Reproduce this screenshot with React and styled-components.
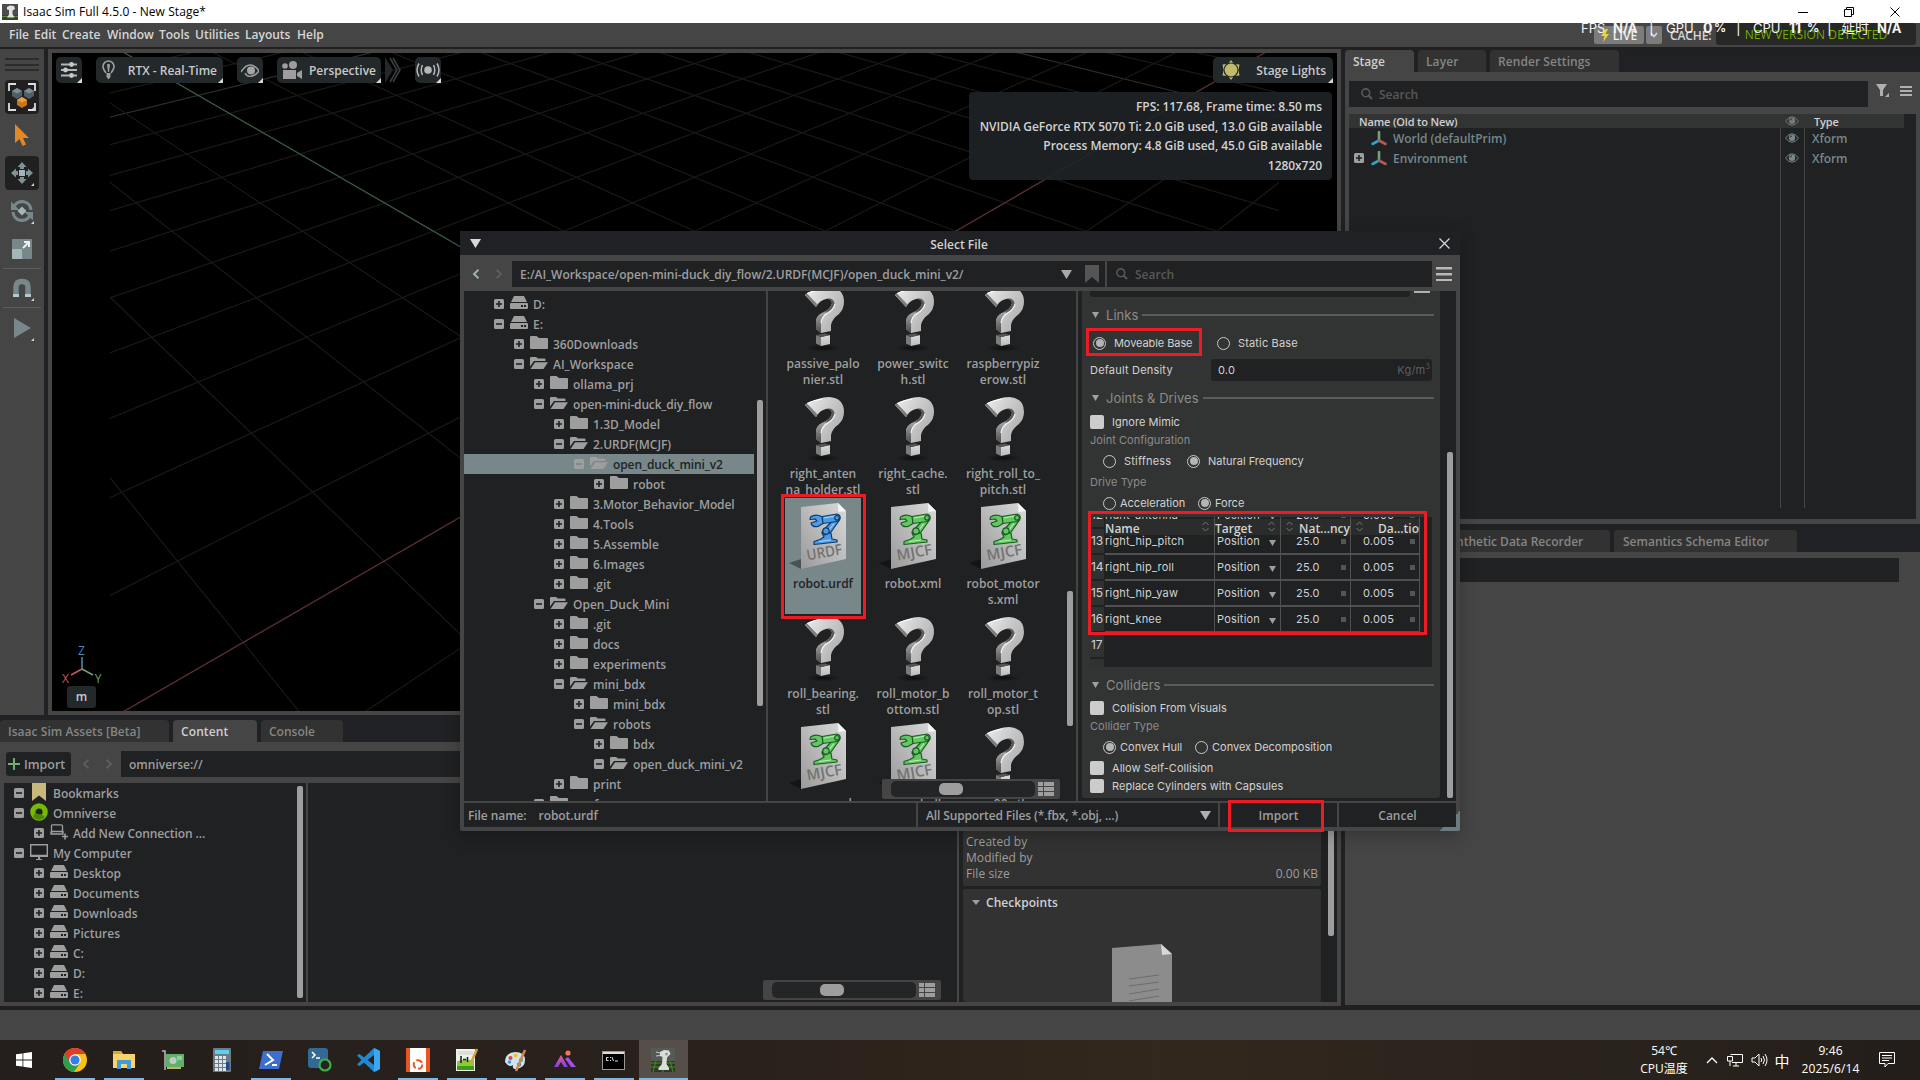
import React from 'react';
import styled, { createGlobalStyle, css } from 'styled-components';

const Global = createGlobalStyle`
  * { box-sizing: border-box; }
  html, body { margin: 0; padding: 0; overflow: hidden; background: #1f2123; }
  body { font-family: "Open Sans", "Noto Sans", "Noto Sans CJK SC", sans-serif; font-size: 12px; font-weight: 600; color: #9e9e9e; }
  svg { display: block; flex: none; }
`;

const Screen = styled.div`
  position: relative; width: 1920px; height: 1080px; overflow: hidden;
  display: flex; flex-direction: column; background: #1f2124;
`;
const Row = styled.div`display: flex; align-items: center; height: ${p => p.$h || 26}px; margin-bottom: ${p => p.$mb || 0}px; padding-left: ${p => p.$pl || 0}px;`;
const Gap = styled.span`display: block; width: ${p => p.$w}px; flex: none;`;
const Grow = styled.span`flex: 1;`;

/* ---------- window chrome ---------- */
const TitleBar = styled.div`
  height: 23px; flex: none; background: #fff; color: #000; display: flex; align-items: center;
  padding-left: 2px; font-weight: 400; font-size: 12px; letter-spacing: 0.08px;
  > span { margin-left: 5px; flex: 1; line-height: 24px; }
`;
const WinButtons = styled.div`display: flex; width: 140px; height: 20px; > div { width: 46px; display: flex; align-items: center; justify-content: center; }`;
const MenuBar = styled.div`
  height: 26px; flex: none; background: #454545; border-bottom: 2px solid #231f1e; display: flex; align-items: center;
  padding-left: 9px; color: #d6d6d6; position: relative;
`;
const MenuItem = styled.span`width: ${p => p.$w}px; white-space: nowrap; line-height: 22px;`;
const MenuRight = styled.div`margin-left: auto; display: flex; align-items: center; height: 24px; padding-right: 4px;`;
const LiveBtn = styled.div`
  width: ${p => p.$w}px; height: 18px; margin-right: 2px; border-radius: 2px; background: #7c7c7c; color: #eee;
  display: flex; align-items: center; justify-content: center; gap: 4px;
`;
const Cache = styled.span`width: 46px; margin-left: 6px; white-space: nowrap; letter-spacing: -0.1px;`;
const Version = styled.div`width: 200px; height: 22px; background: #272727; border-radius: 3px; color: #6fae00; text-align: center; line-height: 24px; align-self: flex-start; font-weight: 500; white-space: nowrap; letter-spacing: 0.1px;`;
const Overlay = styled.div`
  position: absolute; left: 1581px; top: 18px; display: flex; color: #f4f4f4; line-height: 20px; font-size: 14px; font-weight: 400; white-space: nowrap;
  font-family: Inter, "Noto Sans CJK SC", sans-serif;
`;
const OvCell = styled.i`font-style: normal; width: ${p => p.$w}px; font-weight: ${p => (p.$b ? 700 : 400)}; font-size: ${p => p.$s || 14}px;`;

/* ---------- workspace ---------- */
const Workspace = styled.div`display: flex; height: 957px; flex: none;`;
const LeftArea = styled.div`width: 1341px; display: flex; flex-direction: column;`;
const TopArea = styled.div`display: flex; height: 666px;`;
const ToolRail = styled.div`
  width: 44px; margin-right: 4px; background: #454545; display: flex; flex-direction: column; align-items: center; padding-top: 9px;
`;
const Grip = styled.div`width: 34px; height: 13px; display: flex; flex-direction: column; justify-content: space-between; margin-bottom: 9px; > i { height: 2px; background: #2c2c2c; }`;
const Tool = styled.div`
  width: 34px; height: 34px; margin-bottom: 4px; border-radius: 4px; background: ${p => (p.$on ? '#202020' : 'transparent')};
  display: flex; align-items: center; justify-content: center; position: relative;
  ${p => p.$tick && css`&::after { content: ''; position: absolute; right: 5px; bottom: 4px; border-left: 3px solid transparent; border-bottom: 3px solid #d8d8d8; }`}
`;
const RailLine = styled.div`width: 38px; height: 1px; background: #5d5d5d; margin: ${p => p.$m};`;

const ViewFrame = styled.div`flex: 1; background: #454545; padding: 4px;`;
const View = styled.div`position: relative; width: 1285px; height: 658px; background: #000; overflow: hidden;`;
const GridSvg = styled.svg`position: absolute; left: 0; top: 0;`;
const ViewBar = styled.div`position: absolute; left: 4px; right: 4px; top: 4px; height: 26px; display: flex;`;
const ViewBtn = styled.div`
  position: relative; width: ${p => p.$w}px; height: 26px; margin-right: ${p => p.$m || 0}px; padding: 0 ${p => p.$p || 0}px; border-radius: 5px 5px 0 5px; background: #23282b; color: #c8c8c8;
  display: flex; align-items: center; justify-content: ${p => (p.$wide ? 'space-between' : 'center')}; white-space: nowrap;
  ${p => p.$end && css`margin-left: auto;`}
  &::after { content: ''; position: absolute; right: 0; bottom: 0; border-left: 5px solid transparent; border-bottom: 5px solid #d8d8d8; }
`;
const Hud = styled.div`
  position: absolute; left: 917px; top: 39px; width: 363px; height: 88px; border-radius: 4px; background: rgba(31,36,38,0.9);
  color: #d2d2d2; text-align: right; padding: 5px 10px 0 0; line-height: 19.6px; white-space: nowrap; letter-spacing: -0.06px;
`;
const Axis = styled.svg`position: absolute; left: 8px; top: 590px;`;
const Unit = styled.div`position: absolute; left: 15px; top: 633px; width: 29px; height: 22px; border-radius: 3px; background: #23282b; color: #c8c8c8; text-align: center; line-height: 22px;`;

/* ---------- tabs and panels ---------- */
const Tabs = styled.div`display: flex; height: 22px; margin-top: ${p => p.$mt || 0}px; gap: 4px;`;
const Tab = styled.div`
  width: ${p => p.$w}px; height: 22px; border-radius: 4px 4px 0 0; padding-left: ${p => p.$pl || 8}px; line-height: 24px; white-space: nowrap; overflow: hidden;
  background: ${p => (p.$on ? '#454545' : '#323232')}; color: ${p => (p.$on ? '#cfcfcf' : '#858585')}; letter-spacing: ${p => p.$ls || 0}px;
`;
const Body = styled.div`background: #454545; height: ${p => p.$h}px; display: flex; flex-direction: column; padding: ${p => p.$p};`;
const Field = styled.div`
  width: ${p => p.$w}px; height: ${p => p.$h || 26}px; background: #1f2123; padding-left: ${p => p.$pl || 8}px; display: flex; align-items: center; flex: none;
  color: ${p => (p.$dim ? '#585858' : '#9e9e9e')}; white-space: nowrap; margin: ${p => p.$m || '0'};
`;
const ImportBtn = styled.div`width: 65px; height: 24px; border-radius: 3px; background: #1f2123; display: flex; align-items: center; padding-left: 2px; gap: 4px; font-size: 12.4px;`;
const Arrows = styled.div`display: flex; gap: ${p => p.$g}px; padding-left: ${p => p.$pl}px; width: ${p => p.$w}px;`;
const Split = styled.div`display: flex; gap: 2px; height: ${p => p.$h}px; flex: none;`;
const Pane = styled.div`position: relative; width: ${p => p.$w}px; background: #1f2123; overflow: hidden; padding-top: ${p => p.$pt || 0}px;`;
const Thumb = styled.div`position: absolute; width: 6px; border-radius: 2px; background: #9e9e9e; left: ${p => p.$x}px; top: ${p => p.$y}px; height: ${p => p.$h}px;`;
const TreeLine = styled.div`
  display: flex; align-items: center; height: 20px; width: 290px; padding-left: ${p => p.$pl}px; white-space: nowrap; letter-spacing: ${p => p.$ls}px;
  background: ${p => (p.$sel ? '#77878a' : 'transparent')}; color: ${p => (p.$sel ? '#202325' : '#9e9e9e')};
`;
const TreeIcon = styled.span`width: 18px; margin: -3px 5px 0 6px; display: flex; justify-content: center;`;

const SizeBar = styled.div`position: absolute; left: ${p => p.$x}px; top: ${p => p.$y}px; width: 178px; height: 20px; border-radius: 2px; background: #454545; display: flex; align-items: center; padding-left: 9px; gap: 3px;`;
const Track = styled.div`width: 144px; height: 16px; border-radius: 5px; background: #232526; padding: 2px 0 0 48px; > i { display: block; width: 24px; height: 12px; border-radius: 5px; background: #9e9e9e; }`;

const InfoPane = styled(Pane)`padding-left: 4px; display: flex; flex-direction: column; gap: 3px;`;
const Card = styled.div`width: 358px; height: ${p => p.$h}px; background: #323232; border-radius: 2px; padding: ${p => p.$p}; overflow: hidden;`;
const InfoLine = styled.div`display: flex; justify-content: space-between; line-height: 16px; font-weight: 500; letter-spacing: 0.06px;`;
const CardTitle = styled.div`display: flex; align-items: center; gap: 6px; color: #d0d0d0; height: 20px; letter-spacing: 0.05px;`;
const Paper = styled.svg`margin: 32px 0 0 140px;`;

/* ---------- right column ---------- */
const RightArea = styled.div`width: 575px; margin-left: 4px; display: flex; flex-direction: column; padding-top: 1px;`;
const SearchTools = styled.div`display: flex; align-items: center; gap: 10px; padding-left: 8px; height: 26px; margin-top: -6px;`;
const StageTree = styled.div`width: 567px; height: 405px; background: #1f2123; margin-top: 7px; display: flex; flex-direction: column;`;
const StageHead = styled.div`width: 555px; height: 14px; background: #323434; color: #d0d0d0; font-size: 11px; display: flex; align-items: center; padding-left: 10px; letter-spacing: -0.15px; > span:first-child { width: 426px; } > span:last-child { margin-left: 15px; }`;
const StageCols = styled.div`display: flex; height: 380px;`;
const StageCol = styled.div`width: ${p => p.$w}px; border-right: ${p => (p.$line ? '1px solid #454545' : '0')};`;
const StageRow = styled.div`height: 20px; display: flex; align-items: center; color: #77878a; padding-left: ${p => p.$pl || 0}px; padding-top: 1px; white-space: nowrap; > b { font-weight: 600; margin-left: 6px; letter-spacing: -0.05px; } > svg { margin-top: -1px; }`;

/* ---------- dialog ---------- */
const Dialog = styled.div`
  position: absolute; left: 460px; top: 231px; width: 1000px; height: 600px; background: #454545; border-radius: 2px; overflow: hidden;
  box-shadow: 0 4px 16px rgba(0,0,0,0.25);
`;
const DialogTitle = styled.div`height: 24px; background: #1f2124; color: #d0d0d0; display: flex; align-items: center; padding: 0 10px 0 10px; > span { flex: 1; text-align: center; padding: 2px 2px 0 0; }`;
const PathBar = styled.div`height: 36px; padding: 6px 0 4px; display: flex; align-items: center;`;
const PathField = styled(Field)`padding-right: 6px; gap: 13px; > span { flex: 1; letter-spacing: -0.045px; }`;
const Panes = styled.div`display: flex; gap: 2px; height: 510px; padding: 0 4px;`;
const FootBar = styled.div`position: relative; display: flex; gap: 2px; height: 24px; margin: 2px 4px 0;`;
const FootCell = styled.div`width: ${p => p.$w}px; height: 24px; background: #1f2123; display: flex; align-items: center; justify-content: ${p => (p.$c ? 'center' : 'flex-start')}; padding: ${p => p.$p || '1px 0 0'}; white-space: pre; letter-spacing: ${p => p.$ls || 0}px;`;
const Resize = styled.div`position: absolute; right: 0; bottom: 0; width: 20px; height: 20px; background: linear-gradient(135deg, transparent 50%, #6a7c80 50%);`;

const Files = styled.div`display: grid; grid-template-columns: repeat(3, 90px); grid-auto-rows: 110px; padding-left: 10px; margin-top: -13px;`;
const FileCell = styled.div`display: flex; flex-direction: column; align-items: center; position: relative;`;
const FileSel = styled.div`position: absolute; left: 7px; top: 0; width: 76px; height: 116px; background: #77878a;`;
const FileArt = styled.div`height: 78px; width: 76px; position: relative; display: flex; padding-top: ${p => p.$pt}px; padding-left: ${p => p.$pl}px;`;
const FileName = styled.div`position: relative; text-align: center; line-height: 16px; white-space: pre; color: ${p => (p.$sel ? '#202325' : '#9e9e9e')};`;

const SettingsPane = styled.div`position: relative; width: 378px; background: #1f2123; padding-left: 4px;`;
const Settings = styled.div`
  width: 358px; height: 507px; background: #323433; border-radius: 0 0 3px 3px; padding: 0 6px 0 8px; color: #d2d2d2;
  font-family: Inter, Roboto, sans-serif; font-size: 11px; font-weight: 400; letter-spacing: 0.04px;
`;
const Section = styled.div`
  height: ${p => p.$h}px; padding-top: ${p => p.$pt || 0}px; padding-left: 2px; display: flex; align-items: center; color: #8b8b8b; font-size: 13px; white-space: nowrap; letter-spacing: 0.05px;
  > svg { margin-right: 7px; }
  &::after { content: ''; flex: 1; height: 2px; background: #5c5c5c; margin-left: 4px; }
`;
const Line = styled.div`height: ${p => p.$h}px; padding-left: ${p => p.$pl || 0}px; display: flex; align-items: center; white-space: nowrap; color: ${p => (p.$dim ? '#8b8b8b' : '#d2d2d2')};`;
const LineLabel = styled.span`width: 121px; letter-spacing: 0.2px;`;
const RadioItem = styled.div`display: flex; align-items: center; gap: ${p => p.$g}px; width: ${p => p.$w}px; letter-spacing: ${p => p.$ls || 0}px;`;
const Dot = styled.i`
  width: 13px; height: 13px; border-radius: 50%; border: 1.5px solid #c8c8c8; flex: none; display: flex; align-items: center; justify-content: center;
  ${p => p.$on && css`&::after { content: ''; width: 8px; height: 8px; border-radius: 50%; background: #b4b4b4; }`}
`;
const Check = styled.i`width: 14px; height: 14px; border-radius: 2px; background: #cccccc; margin-right: 8px; flex: none;`;
const NumField = styled.div`width: 221px; height: 22px; border-radius: 3px; background: #1f2123; display: flex; align-items: center; padding: 0 2px 0 7px; justify-content: space-between; letter-spacing: 0.2px; > span:last-child { color: #5e5e5e; } sup { font-size: 7px; line-height: 0; }`;
const PartField = styled.div`height: 6px; display: flex; justify-content: space-between; padding-right: 4px; > div { width: 320px; background: #1f2123; border-radius: 0 0 3px 3px; } > i { width: 16px; height: 2px; background: #b0b0b0; }`;

const Joints = styled.div`position: relative; width: 342px; height: 150px; background: #1f2123; overflow: hidden;`;
const JHead = styled.div`position: absolute; left: 15px; top: 2px; width: 315px; height: 16px; background: #2b2d2d; display: grid; grid-template-columns: 110px 66px 70px 69px; font-family: "Open Sans", sans-serif; font-weight: 600; font-size: 12px; letter-spacing: 0; line-height: 20px; white-space: nowrap;`;
const JHeadCell = styled.div`display: flex; justify-content: space-between; border-right: 1px solid #555; padding-left: ${p => p.$pl || 0}px; padding-right: ${p => p.$pr || 0}px; > svg { margin-top: 2px; }`;
const JRows = styled.div`margin-top: -14px;`;
const JRow = styled.div`display: flex; height: 26px; letter-spacing: 0.2px;`;
const JIndex = styled.div`width: 14px; height: 24px; margin-right: 1px; padding-left: 1px; background: #303232; letter-spacing: -0.1px; font-size: 12px; line-height: 24px;`;
const JCell = styled.div`
  width: ${p => p.$w}px; height: 26px; border-bottom: 2px solid #505050; border-right: 1px solid #505050; padding: 0 ${p => p.$pr || 0}px 0 ${p => p.$pl || 0}px;
  display: flex; justify-content: space-between; align-items: center; white-space: nowrap;
  > svg { margin-top: 4px; }
`;
const Key = styled.i`width: 5px; height: 5px; background: #555;`;

const Mark = styled.div`position: absolute; border: 3px solid #ed1c24; left: ${p => p.$x}px; top: ${p => p.$y}px; width: ${p => p.$w}px; height: ${p => p.$h}px;`;

/* ---------- status and task bar ---------- */
const StatusBar = styled.div`height: 34px; flex: none; background: #454545; border-top: 4px solid #231f1e;`;
const TaskBar = styled.div`height: 40px; flex: none; display: flex; background: linear-gradient(90deg, #241f1d, #2a211b 40%, #33281d 60%, #2a231d 80%, #241e1a); color: #fff; font-weight: 400;`;
const Slot = styled.div`
  width: ${p => p.$w || 49}px; height: 40px; display: flex; align-items: center; justify-content: center; position: relative; padding-right: ${p => p.$pr || 2}px;
  background: ${p => (p.$active ? '#564e48' : 'transparent')};
  &::after { content: ''; position: absolute; bottom: 0; left: ${p => (p.$active ? 0 : 4)}px; right: ${p => (p.$active ? 0 : 5)}px; height: 2px; background: ${p => (p.$run || p.$active ? '#76b9ed' : 'transparent')}; }
`;
const Tray = styled.div`margin-left: auto; display: flex; align-items: center; height: 40px; padding-right: 14px;`;
const TwoLine = styled.div`width: ${p => p.$w}px; text-align: center; font-size: 12px; line-height: 18px; white-space: nowrap; letter-spacing: ${p => p.$ls || 0}px;`;
const TrayIcon = styled.div`width: ${p => p.$w}px; padding-left: ${p => p.$pl || 0}px; display: flex; justify-content: center; font-size: 15px;`;

/* ---------- drawings ---------- */
const Expander = ({ open, sel }) => (
  <svg width="10" height="10"><rect width="10" height="10" rx="1.5" fill="#9e9e9e" />
    <path d={open ? 'M2 5H8' : 'M2 5H8M5 2V8'} stroke={sel ? '#77878a' : '#1f2123'} strokeWidth="1.6" /></svg>
);
const icons = {
  drive: <svg width="18" height="13"><path d="M4 0H14L17 6H1Z" fill="#9e9e9e" /><path fillRule="evenodd" d="M1 7H17Q18 7 18 8V12Q18 13 17 13H1Q0 13 0 12V8Q0 7 1 7ZM11 9V11H13V9ZM14 9V11H16V9Z" fill="#9e9e9e" /></svg>,
  folder: <svg width="18" height="13"><path d="M0 1Q0 0 1 0H6.5L9 2H17Q18 2 18 3V12Q18 13 17 13H1Q0 13 0 12Z" fill="#9e9e9e" /></svg>,
  open: <svg width="18" height="12"><path d="M0 1Q0 0 1 0H6L8 1.5H14.5Q15.5 1.5 15.5 2.5V4H4L0 9.5Z" fill="#9e9e9e" /><path d="M5 5.2H18L13.5 12H0.5Z" fill="#9e9e9e" /></svg>,
  mark: <svg width="14" height="18"><path d="M0 0H14V18L7 12.500L0 18Z" fill="#c9b87c" /></svg>,
  omni: <svg width="18" height="18"><circle cx="9" cy="9" r="6.2" fill="none" stroke="#78b800" strokeWidth="5.2" /><path d="M3 14A8 8 0 0 0 15 14L11 11Q7 12 5.500 9Z" fill="#4f8500" /></svg>,
  conn: <svg width="18" height="16"><path d="M1.500 10V2Q1.500 .8 3 .8H11Q12.500 .8 12.500 2V9M1 7.500H13V10H9M1 7.500V10H9" fill="none" stroke="#9e9e9e" strokeWidth="1.300" /><path d="M15 9.500V15.500M12 12.500H18" stroke="#9e9e9e" strokeWidth="1.600" /></svg>,
  pc: <svg width="18" height="16"><path d="M.7 .7H17.300V11.500H.7Z" fill="none" stroke="#9e9e9e" strokeWidth="1.400" /><path d="M0 11H18V13H0ZM8 13H10V15H12V16H6V15H8Z" fill="#9e9e9e" /></svg>,
};
const Tri = ({ w = 8, h = 6, c = '#9e9e9e' }) => <svg width={w} height={h}><path d={`M0 0H${w}L${w / 2} ${h}Z`} fill={c} /></svg>;
const Burger = ({ w, g, t, c = '#b0b0b0' }) => <svg width={w} height={g * 2 + t}>{[0, 1, 2].map(i => <rect key={i} y={i * g} width={w} height={t} fill={c} />)}</svg>;
const Lens = () => <svg width="12" height="12"><circle cx="4.800" cy="4.800" r="3.900" fill="none" stroke="#585858" strokeWidth="1.600" /><path d="M7.500 7.500L11 11" stroke="#585858" strokeWidth="2" /></svg>;
const Chev = ({ left, c }) => <svg width="8" height="10"><path d={left ? 'M6.500 .8L2 5L6.500 9.200' : 'M1.500 .8L6 5L1.500 9.200'} fill="none" stroke={c} strokeWidth="2" /></svg>;
const ListIcon = () => <svg width="16" height="14">{[0, 5, 10].map(y => <g key={y} fill="#9e9e9e"><rect y={y} width="5" height="4" /><rect x="6" y={y} width="10" height="4" /></g>)}</svg>;
const EyeIcon = ({ c = '#77878a' }) => <svg width="14" height="10"><path d="M.5 5Q7 -3.500 13.500 5Q7 13.500 .5 5Z" fill="none" stroke={c} /><circle cx="7" cy="4.800" r="3.200" fill={c} /><path d="M5 4.500Q5.300 3 7 3" fill="none" stroke="#1f2123" strokeWidth=".9" /></svg>;
const Xform = () => <svg width="16" height="15"><path d="M8 9V1" stroke="#75a275" strokeWidth="2.600" strokeLinecap="round" /><path d="M8 9.500L1.500 13" stroke="#2ea3c4" strokeWidth="2.600" strokeLinecap="round" /><path d="M8 9.500L14.500 13" stroke="#b15a5a" strokeWidth="2.600" strokeLinecap="round" /></svg>;
const Cross = ({ s, c, w = 1 }) => <svg width={s} height={s}><path d={`M.5 .5L${s - 0.5} ${s - 0.5}M${s - 0.5} .5L.5 ${s - 0.5}`} stroke={c} strokeWidth={w} /></svg>;
const Sort = () => <svg width="7" height="11"><path d="M.5 4L3.500 1L6.500 4M.5 7L3.500 10L6.500 7" fill="none" stroke="#777" /></svg>;

const HiddenSvg = styled.svg`position: absolute;`;
const Defs = () => (
  <HiddenSvg width="0" height="0"><defs>
    <linearGradient id="qg" x1="0" y1="0" x2="1" y2=".6"><stop offset="0" stopColor="#efefef" /><stop offset=".5" stopColor="#cdcdcd" /><stop offset="1" stopColor="#b0b0b0" /></linearGradient>
    <linearGradient id="qs" x1="0" y1="0" x2="0" y2="1"><stop offset="0" stopColor="#dcdcdc" /><stop offset="1" stopColor="#bbbbbb" /></linearGradient>
    <linearGradient id="qd" x1="0" y1="0" x2="0" y2="1"><stop offset="0" stopColor="#a8a8a8" /><stop offset="1" stopColor="#4c4c4c" /></linearGradient>
    <linearGradient id="pg" x1="1" y1="0" x2="0" y2="1"><stop offset="0" stopColor="#dadada" /><stop offset="1" stopColor="#9a9a9a" /></linearGradient>
    <radialGradient id="sh"><stop offset="0" stopColor="#0c0d0d" /><stop offset="1" stopColor="#0c0d0d" stopOpacity="0" /></radialGradient>
    <linearGradient id="vi" x1="0" y1="0" x2="0" y2="1"><stop offset="0" stopColor="#f06080" /><stop offset="1" stopColor="#7a3cf0" /></linearGradient>
  </defs></HiddenSvg>
);
const Question = () => (
  <svg width="44" height="66" viewBox="0 0 44 66">
    <ellipse cx="19" cy="61" rx="17" ry="3.500" fill="url(#sh)" />
    <path d="M12 20L1 8Q5 4 14 2Q20 0 25 0Q40 1 40 15Q40 22 35 27Q28 32 27 38V44L17 46L12 42V35Q12 29 18 26Q27 22 28 16Q27 11 22 12Q16 13 12 20Z" fill="url(#qg)" />
    <path d="M1 8L3 6.500L13.500 17.500L12 20Z" fill="#7c7c7c" />
    <path d="M22 12Q29 10 30.500 16Q30 22 22 26L18 26Q27 22 28 16Q27 12 22 12Z" fill="#5a5a5a" />
    <path d="M12 42V35Q12 29 18 26L23 24.500Q17 30 17 36V46Z" fill="url(#qd)" />
    <path d="M17 36Q18 29 24 26Q30 22 31 17" fill="none" stroke="#f2f2f2" strokeWidth="1.200" />
    <path d="M3 6.500Q10 3.500 18 2" fill="none" stroke="#ffffff" strokeWidth="1" />
    <path d="M12 48L17 50V59L12 56.500Z" fill="#7b7b7b" /><path d="M17 50L26 48V57L17 59Z" fill="url(#qs)" /><path d="M12 48L21 46.500L26 48L17 50Z" fill="#565656" />
  </svg>
);
const Arm = ({ c, l, d }) => (
  <g stroke={d} strokeWidth="1.200" strokeLinejoin="round" fill={c}>
    <path d="M33 30H42L43 36L48 37V39L25 41.500V38.500L31 36.500L35 34Z" />
    <path d="M43 18L50.500 17L42 29L36 32L33 29Z" />
    <path d="M34 14L30 12.500Q25 11.500 21.500 14L21 16.500L26 16L28 18L22 20Q23 24.500 29 23.500L34 20.500Z" />
    <path d="M33 13.500L48 11Q52 12 51 16L48 18.500L34 20.500Z" />
    <path d="M35 15L46 13M40 27L45 20.500M30 38.500L42 37" stroke={l} fill="none" />
    <circle cx="48" cy="14.800" r="2.300" /><circle cx="37" cy="28" r="3.200" />
  </g>
);
const Doc = ({ kind }) => (
  <svg width="60" height="68" viewBox="0 0 60 68">
    <path d="M0 60L12 56V66Z" fill="#000" opacity=".38" />
    <path d="M12 4L49 0L57 8V56L12 66Z" fill="url(#pg)" />
    <path d="M49 0L57 8L49.500 9Z" fill="#f6f6f6" />
    {kind === 'URDF' ? <Arm c="#4a9be8" l="#a9d4fb" d="#123a66" /> : <Arm c="#62c962" l="#b4f2a8" d="#1c5a26" />}
    <text x="18.500" y="57.500" transform="rotate(-10 18.500 57.500)" fontFamily="Open Sans" fontWeight="600" fontSize="15" fill="#737373" textLength="36" lengthAdjust="spacingAndGlyphs">{kind}</text>
  </svg>
);

const CX = 642.5, CY = 329, F = 1013.2;
const project = (x, y) => {
  const depth = 1.73205 - (x + y) / 1.73205;
  return [CX + (F * (y - x)) / 1.41421 / depth, CY + (F * (x + y)) / 2.44949 / depth];
};
const gridLine = (s, alongX) => {
  const far = -12, near = 2.85 - s;
  const a = alongX ? project(far, s) : project(s, far);
  const b = alongX ? project(near, s) : project(s, near);
  return `M${a[0].toFixed(1)} ${a[1].toFixed(1)}L${b[0].toFixed(1)} ${b[1].toFixed(1)}`;
};
const ks = Array.from({ length: 49 }, (_, i) => i - 34);
const Scene = () => (
  <GridSvg width="1285" height="658">
    <clipPath id="vc"><rect x="58" y="0" width="1169" height="658" /></clipPath>
    <g clipPath="url(#vc)" fill="none">
      {ks.filter(k => k !== 0).map(k => (
        <path key={k} d={gridLine(k * 0.2, true) + gridLine(k * 0.2, false)} stroke={k % 10 === 0 ? '#2d2d2d' : '#191919'} strokeWidth="1.2" />
      ))}
      <path d={gridLine(0, true)} stroke="#5e3130" strokeWidth="1.3" />
      <path d={gridLine(0, false)} stroke="#3b5a3f" strokeWidth="1.3" />
    </g>
  </GridSvg>
);

const TreeRow = ({ lvl, base, open, icon, label, sel }) => (
  <TreeLine $pl={base + lvl * 20} $sel={sel} $ls={label.length > 22 ? -0.17 : label.length > 15 ? -0.1 : 0}>
    <Expander open={open} sel={sel} /><TreeIcon>{icons[icon]}</TreeIcon>{label}
  </TreeLine>
);

const contentTree = [
  [0, 1, 'mark', 'Bookmarks'], [0, 1, 'omni', 'Omniverse'], [1, 0, 'conn', 'Add New Connection ...'], [0, 1, 'pc', 'My Computer'],
  [1, 0, 'drive', 'Desktop'], [1, 0, 'drive', 'Documents'], [1, 0, 'drive', 'Downloads'], [1, 0, 'drive', 'Pictures'],
  [1, 0, 'drive', 'C:'], [1, 0, 'drive', 'D:'], [1, 0, 'drive', 'E:'],
];
const dialogTree = [
  [0, 0, 'drive', 'D:'], [0, 1, 'drive', 'E:'], [1, 0, 'folder', '360Downloads'], [1, 1, 'open', 'AI_Workspace'],
  [2, 0, 'folder', 'ollama_prj'], [2, 1, 'open', 'open-mini-duck_diy_flow'], [3, 0, 'folder', '1.3D_Model'], [3, 1, 'open', '2.URDF(MCJF)'],
  [4, 1, 'open', 'open_duck_mini_v2', 1], [5, 0, 'folder', 'robot'], [3, 0, 'folder', '3.Motor_Behavior_Model'], [3, 0, 'folder', '4.Tools'],
  [3, 0, 'folder', '5.Assemble'], [3, 0, 'folder', '6.Images'], [3, 0, 'folder', '.git'], [2, 1, 'open', 'Open_Duck_Mini'],
  [3, 0, 'folder', '.git'], [3, 0, 'folder', 'docs'], [3, 0, 'folder', 'experiments'], [3, 1, 'open', 'mini_bdx'],
  [4, 0, 'folder', 'mini_bdx'], [4, 1, 'open', 'robots'], [5, 0, 'folder', 'bdx'], [5, 1, 'open', 'open_duck_mini_v2'],
  [3, 0, 'folder', 'print'], [2, 0, 'folder', 'conf'],
];
const files = [
  ['q', 'passive_palo\nnier.stl'], ['q', 'power_switc\nh.stl'], ['q', 'raspberrypiz\nerow.stl'],
  ['q', 'right_anten\nna_holder.stl'], ['q', 'right_cache.\nstl'], ['q', 'right_roll_to_\npitch.stl'],
  ['URDF', 'robot.urdf', 1], ['MJCF', 'robot.xml'], ['MJCF', 'robot_motor\ns.xml'],
  ['q', 'roll_bearing.\nstl'], ['q', 'roll_motor_b\nottom.stl'], ['q', 'roll_motor_t\nop.stl'],
  ['MJCF', 'scene.xml'], ['MJCF', 'scene_ball.'], ['q', 'sg90.stl'],
];
const joints = [[12, 'right_antenna'], [13, 'right_hip_pitch'], [14, 'right_hip_roll'], [15, 'right_hip_yaw'], [16, 'right_knee']];

const Slider = ({ x, y }) => <SizeBar $x={x} $y={y}><Track><i /></Track><ListIcon /></SizeBar>;

const ImportSettings = () => (
  <Settings>
    <PartField><div /><i /></PartField>
    <Section $h={35}><Tri w={7} h={6} c="#a0a0a0" />Links</Section>
    <Line $h={22} $pl={3}><RadioItem $g={8} $w={124} $ls={-0.08}><Dot $on />Moveable Base</RadioItem><RadioItem $g={8} $ls={0.15}><Dot />Static Base</RadioItem></Line>
    <Line $h={32}><LineLabel>Default Density</LineLabel><NumField><span>0.0</span><span>Kg/m<sup>3</sup></span></NumField></Line>
    <Section $h={24}><Tri w={7} h={6} c="#a0a0a0" />Joints &amp; Drives</Section>
    <Line $h={23}><Check />Ignore Mimic</Line>
    <Line $h={14} $dim>Joint Configuration</Line>
    <Line $h={28} $pl={13}><RadioItem $g={8} $w={84} $ls={0.2}><Dot />Stiffness</RadioItem><RadioItem $g={8}><Dot $on />Natural Frequency</RadioItem></Line>
    <Line $h={14} $dim>Drive Type</Line>
    <Line $h={28} $pl={13}><RadioItem $g={4} $w={95}><Dot />Acceleration</RadioItem><RadioItem $g={4}><Dot $on />Force</RadioItem></Line>
    <Joints>
      <JRows>
        {joints.map(([n, name]) => (
          <JRow key={n}><JIndex>{n}</JIndex><JCell $w={110}>{name}</JCell><JCell $w={66} $pl={2} $pr={4}>Position<Tri w={7} h={6} /></JCell>
            <JCell $w={70} $pl={15} $pr={4}>25.0<Key /></JCell><JCell $w={69} $pl={12} $pr={4}>0.005<Key /></JCell></JRow>
        ))}
        <JRow><JIndex>17</JIndex></JRow><JRow><JIndex /></JRow>
      </JRows>
      <JHead>
        <JHeadCell $pr={5}>Name<Sort /></JHeadCell><JHeadCell $pr={5}>Target<Sort /></JHeadCell>
        <JHeadCell $pl={5}><Sort />Nat...ncy</JHeadCell><JHeadCell $pl={5}><Sort />Da...tio</JHeadCell>
      </JHead>
    </Joints>
    <Section $h={30} $pt={6}><Tri w={7} h={6} c="#a0a0a0" />Colliders</Section>
    <Line $h={22}><Check />Collision From Visuals</Line>
    <Line $h={14} $dim>Collider Type</Line>
    <Line $h={28} $pl={13}><RadioItem $g={4} $w={92}><Dot $on />Convex Hull</RadioItem><RadioItem $g={4}><Dot />Convex Decomposition</RadioItem></Line>
    <Line $h={14}><Check />Allow Self-Collision</Line>
    <Line $h={22}><Check />Replace Cylinders with Capsules</Line>
  </Settings>
);

const FileDialog = () => (
  <Dialog>
    <DialogTitle><Tri w={11} h={9} c="#d8d8d8" /><span>Select File</span><Cross s={11} c="#d8d8d8" w={1.2} /></DialogTitle>
    <PathBar>
      <Arrows $g={15} $pl={12} $w={52}><Chev left c="#9fb0b3" /><Chev c="#56605f" /></Arrows>
      <PathField $w={593}><span>E:/AI_Workspace/open-mini-duck_diy_flow/2.URDF(MCJF)/open_duck_mini_v2/</span><Tri w={11} h={9} c="#a8a8a8" />
        <svg width="14" height="18"><path d="M0 0H14V18L7 12L0 18Z" fill="#555" /></svg></PathField>
      <Field $w={325} $pl={9} $dim $m="0 4px 0 2px"><Lens /><Gap $w={7} />Search</Field>
      <Burger w={16} g={6} t={2.5} c="#b8b8b8" />
    </PathBar>
    <Panes>
      <Pane $w={302} $pt={3}>
        {dialogTree.map(([l, o, i, t, s], n) => <TreeRow key={n} lvl={l} base={30} open={o} icon={i} label={t} sel={s} />)}
        <Thumb $x={293} $y={109} $h={306} />
      </Pane>
      <Pane $w={308}>
        <Files>
          {files.map(([k, t, s], n) => (
            <FileCell key={n}>{s && <FileSel />}
              <FileArt $pt={k === 'q' ? 9 : 5} $pl={k === 'q' ? 19 : 4}>{k === 'q' ? <Question /> : <Doc kind={k} />}</FileArt>
              <FileName $sel={s}>{t}</FileName></FileCell>
          ))}
        </Files>
        <Thumb $x={299} $y={300} $h={135} />
        <Slider x={114} y={488} />
      </Pane>
      <SettingsPane><ImportSettings /><Thumb $x={369} $y={161} $h={346} /></SettingsPane>
    </Panes>
    <Resize />
    <FootBar>
      <FootCell $w={452} $p="1px 0 0 4px" $ls={-0.08}>File name:<Gap $w={12} />robot.urdf</FootCell>
      <FootCell $w={300} $p="1px 7px 0 8px" $ls={-0.13}><Grow>All Supported Files (*.fbx, *.obj, ...)</Grow><Tri w={11} h={9} c="#b0b0b0" /></FootCell>
      <FootCell $w={117} $c>Import</FootCell><FootCell $w={117} $c>Cancel</FootCell>
    </FootBar>
  </Dialog>
);

const menu = [['File', 25], ['Edit', 28], ['Create', 45], ['Window', 52], ['Tools', 36], ['Utilities', 50], ['Layouts', 52], ['Help', 40]];

const taskIcons = [
  <svg width="24" height="24" viewBox="0 0 24 24"><circle cx="12" cy="12" r="12" fill="#fbc116" /><path d="M12 12L1.600 6A12 12 0 0 0 11 24L17 15Z" fill="#2f9e4f" /><path d="M12 6H22.400A12 12 0 0 0 1.600 6L7 14Z" fill="#e33b2e" /><circle cx="12" cy="12" r="5.800" fill="#fff" /><circle cx="12" cy="12" r="4.600" fill="#3a7de8" /></svg>,
  <svg width="22" height="18"><path d="M0 0H8L10 3H22V17H0Z" fill="#f8d26b" /><path d="M0 0H8L9 3H0Z" fill="#e0a52a" /><path d="M4 9H18V18H14V13H8V18H4Z" fill="#3f9bdc" /></svg>,
  <svg width="24" height="20"><path d="M1 1H4V20" fill="none" stroke="#bbb" strokeWidth="1.500" /><rect x="5" y="4" width="18" height="13" fill="#5fb06a" /><rect x="16" y="6" width="5" height="4" fill="#8fd08f" /><path d="M6 17H20V19H6Z" fill="#c9b060" /><circle cx="12" cy="10.500" r="3.500" fill="#c4c8c4" /></svg>,
  <svg width="18" height="24"><rect width="18" height="24" rx="1" fill="#6e7a84" /><rect x="2" y="2" width="14" height="4" fill="#5bd0f0" />{[8, 12, 16, 20].map(y => [2, 6, 10].map(x => <rect key={x + '-' + y} x={x} y={y} width="3" height="3" fill="#dfe5ea" />))}<rect x="13" y="14" width="3.500" height="8" fill="#1d4e8a" /></svg>,
  <svg width="24" height="18"><path d="M4 0H24L20 18H0Z" fill="#3c6fd0" /><path d="M8 3L14 9L6 14M13 14H18" fill="none" stroke="#fff" strokeWidth="2" /></svg>,
  <svg width="24" height="24"><rect width="20" height="20" rx="3" fill="#336a94" /><path d="M4 4L7 7L4 10M8 10H12" fill="none" stroke="#fff" strokeWidth="1.500" /><circle cx="17" cy="17" r="5.500" fill="#222" stroke="#3fae49" strokeWidth="2.200" /></svg>,
  <svg width="24" height="24"><path fillRule="evenodd" d="M17 0L23 3V21L17 24L7 14.500L2.500 18L0 16.500L4.500 12L0 7.500L2.500 6L7 9.500ZM17 7L10.500 12L17 17Z" fill="#1f8ad2" /><path d="M17 0L23 3V21L17 24Z" fill="#3ba7ee" /></svg>,
  <svg width="24" height="24"><rect width="24" height="24" fill="#fff" /><rect width="4" height="24" fill="#e95420" /><rect x="20" width="4" height="24" fill="#e95420" /><circle cx="12" cy="16.500" r="4.300" fill="none" stroke="#e95420" strokeWidth="2" strokeDasharray="6.500 2.500" /></svg>,
  <svg width="24" height="24"><path d="M1 1H20V23H1Z" fill="#eef2ea" /><path d="M2 13Q10 11 19 12V22H2Z" fill="#8acb3c" /><path d="M2 18H19V22H2Z" fill="#3f9a1c" /><path d="M3 4H18M3 6H18" stroke="#c9cfc5" /><path d="M6 8V15M8 11.500H11M12.500 9V14" stroke="#222" strokeWidth="1.600" /><path d="M22 1L15.500 16" stroke="#d8a03a" strokeWidth="2.500" /></svg>,
  <svg width="24" height="24"><path d="M1 14Q1 5 11 4Q21 4 21 12Q21 20 12 21Q8 21 9 17Q5 20 1 14Z" fill="#cfe4ef" /><circle cx="6.500" cy="10" r="2" fill="#e04040" /><circle cx="11.500" cy="7.500" r="2" fill="#f0c030" /><circle cx="5.500" cy="14" r="1.800" fill="#3f9bdc" /><circle cx="17" cy="12" r="2" fill="#40a040" /><circle cx="15" cy="16.500" r="2" fill="#3060d0" /><path d="M21 2L12 23" stroke="#c98a55" strokeWidth="2.500" /></svg>,
  <svg width="24" height="20"><path d="M1 17L8 5L15 17H11L8 12L5 17Z" fill="url(#vi)" /><path d="M12 9L15 7L23 17H18L14.500 12Z" fill="#a24df0" /><circle cx="15" cy="3" r="2.600" fill="#f0785a" /></svg>,
  <svg width="23" height="19"><rect x=".5" y=".5" width="22" height="18" fill="#000" stroke="#999" /><rect x="1" y="1" width="21" height="2" fill="#ddd" /><path d="M6.500 6.500H4.500V9.500H6.500M8.500 6V7M8.500 9V10M10 6L11.500 10M13 10H16" stroke="#ddd" fill="none" /></svg>,
  <svg width="24" height="24"><rect width="24" height="24" fill="#565a56" /><path d="M0 13H24V24H0Z" fill="#2c3a22" /><path d="M0 15H24M0 19H24M5 13L2 24M12 13V24M19 13L22 24" stroke="#4d8a2a" fill="none" /><path d="M9 4L13 2L18 2.500L19.500 6L16 9.500L15.500 16L18 20V22H7.500V20L11 16L11.500 9L9 8Z" fill="#dcdcdc" /><path d="M9 5L5 4M9 7.500L5 8" stroke="#ccc" /><circle cx="15.500" cy="6" r="1.500" fill="#999" /></svg>,
];
const running = [1, 1, 0, 0, 1, 0, 0, 1, 1, 1, 1, 1, 0];

export default function App() {
  return (
    <Screen>
      <Global /><Defs />
      <TitleBar>
        <svg width="16" height="16"><rect width="16" height="16" fill="#4a4d4a" /><path d="M0 11H16V16H0Z" fill="#34452a" /><path d="M0 12.500H16" stroke="#5c8a3a" /><path d="M5 3L8 1.500L12 2L13 5L10.500 6.500V10L12.500 13.500H5L7 10.500V6L5 5.500Z" fill="#e2e2e2" /></svg>
        <span>Isaac Sim Full 4.5.0 - New Stage*</span>
        <WinButtons>
          <div><svg width="10" height="10"><path d="M0 5.500H10" stroke="#000" /></svg></div>
          <div><svg width="10" height="10"><path d="M2.500 2.500V.5H9.500V7.500H7.500M.5 2.500H7.500V9.500H.5Z" fill="none" stroke="#000" /></svg></div>
          <div><Cross s={10} c="#000" /></div>
        </WinButtons>
      </TitleBar>
      <MenuBar>
        {menu.map(([t, w]) => <MenuItem key={t} $w={w}>{t}</MenuItem>)}
        <MenuRight>
          <LiveBtn $w={50}><svg width="8" height="13"><path d="M5 0L0 7H3.500L2 13L8 5H4.500L7 0Z" fill="#e6d93c" /></svg>LIVE</LiveBtn>
          <LiveBtn $w={16}><svg width="8" height="6"><path d="M1 1L4 4.500L7 1" fill="none" stroke="#ddd" strokeWidth="1.500" /></svg></LiveBtn>
          <Cache>CACHE:</Cache><Version>NEW VERSION DETECTED</Version>
        </MenuRight>
      </MenuBar>

      <Workspace>
        <LeftArea>
          <TopArea>
            <ToolRail>
              <Grip><i /><i /><i /></Grip>
              <Tool $on $tick><svg width="28" height="28"><path d="M1 8V1H8M20 1H27V8M27 20V27H20M8 27H1V20" fill="none" stroke="#ddd" strokeWidth="1.800" /><path d="M4 8L9 5L14 8V13L9 16L4 13Z" fill="#4f5f66" /><path d="M4 8L9 10.500L14 8L9 5Z" fill="#7d8d94" /><path d="M16 8L21 5L26 8V13L21 16L16 13Z" fill="#4f5f66" /><path d="M16 8L21 10.500L26 8L21 5Z" fill="#7d8d94" /><path d="M9 17L14 14L19 17V22L14 25L9 22Z" fill="#c9761b" /><path d="M9 17L14 19.500L19 17L14 14Z" fill="#f0a040" /></svg></Tool>
              <Tool><svg width="16" height="22"><path d="M1 0V19L5.500 15L8.500 22L12 20.500L9 14H15Z" fill="#df8a24" /></svg></Tool>
              <Tool $on $tick><svg width="24" height="24"><path d="M12 1L16.500 6H14V8H10V6H7.500ZM12 23L16.500 18H14V16H10V18H7.500ZM1 12L6 7.500V10H8V14H6V16.500ZM23 12L18 7.500V10H16V14H18V16.500Z" fill="#7f9296" /><rect x="8.500" y="8.500" width="7" height="7" fill="#a3b7bb" stroke="#202020" /></svg></Tool>
              <Tool $tick><svg width="24" height="24"><path d="M4 7.500A9 9 0 0 1 21 11M20 16.500A9 9 0 0 1 3 13" fill="none" stroke="#77878a" strokeWidth="3.200" /><path d="M1 2.500V11H9.500ZM23 21.500V13H14.500Z" fill="#77878a" /><path d="M12 7.500L16.500 12L12 16.500L7.500 12Z" fill="#a3b7bb" /></svg></Tool>
              <Tool><svg width="20" height="20"><rect width="20" height="20" rx="1" fill="#77878a" /><path d="M0 10H10V20H1Q0 20 0 19Z" fill="#a3b7bb" /><path d="M11 9L17 3M12 3H17V8" fill="none" stroke="#eee" strokeWidth="2" /></svg></Tool>
              <RailLine $m="-2px 0 2px" />
              <Tool $tick><svg width="20" height="20"><path d="M4 16V9Q4 3.500 10 3.500T16 9V16" fill="none" stroke="#77878a" strokeWidth="5.500" /><path d="M1 16H7V19H1ZM13 16H19V19H13Z" fill="#b5c6ca" /></svg></Tool>
              <RailLine $m="-2px 0 3px" />
              <Tool $tick><svg width="18" height="20"><path d="M1 0L18 10L1 20Z" fill="#77878a" /></svg></Tool>
            </ToolRail>
            <ViewFrame><View>
              <Scene />
              <ViewBar>
                <ViewBtn $w={26} $m={14}><svg width="18" height="16"><path d="M1 2.500H17M1 8H17M1 13.500H17" stroke="#b5b5b5" strokeWidth="2" /><g fill="#c8c8c8"><circle cx="11.500" cy="2.500" r="2.400" /><circle cx="5.500" cy="8" r="2.400" /><circle cx="11.500" cy="13.500" r="2.400" /></g></svg></ViewBtn>
                <ViewBtn $w={127} $m={14} $p={6} $wide><svg width="13" height="20"><path d="M4 13Q1 9 1 6.500A5.500 5.500 0 0 1 12 6.500Q12 9 9 13" fill="none" stroke="#9e9e9e" strokeWidth="1.600" /><path d="M4.500 13H8.500V17L6.500 19.500L4.500 17ZM5 4.500A2 2 0 0 1 8 4.500L7 12H6Z" fill="#9e9e9e" /></svg>RTX - Real-Time</ViewBtn>
                <ViewBtn $w={26} $m={14}><svg width="18" height="13"><path d="M0 8Q5 0 10 1Q15 2 18 7Q14 12 9 12.500Q5 12 4 9" fill="none" stroke="#9e9e9e" strokeWidth="1.500" /><circle cx="10" cy="6.500" r="4" fill="#a5a5a5" /></svg></ViewBtn>
                <ViewBtn $w={104} $m={4} $p={5} $wide><svg width="20" height="18"><circle cx="3" cy="5" r="2.800" fill="#9e9e9e" /><circle cx="11" cy="4" r="4" fill="#9e9e9e" /><path d="M1 9H14V18H1Z" fill="#9e9e9e" /><path d="M15 12L20 9V18L15 15Z" fill="#9e9e9e" /></svg>Perspective</ViewBtn>
                <svg width="16" height="26"><path d="M0 0L8 13L0 26Z" fill="#23282b" /><path d="M5 1L12 13L5 25M8 1L15 13L8 25" fill="none" stroke="#3a4043" strokeWidth="1.500" /></svg>
                <Gap $w={14} />
                <ViewBtn $w={26}><svg width="24" height="14"><circle cx="12" cy="7" r="3.800" fill="#b8b8b8" /><path d="M6.500 2Q4 7 6.500 12M3 .5Q-1 7 3 13.500M17.500 2Q20 7 17.500 12M21 .5Q25 7 21 13.500" fill="none" stroke="#b8b8b8" strokeWidth="1.500" /></svg></ViewBtn>
                <ViewBtn $w={120} $p={7} $wide $end><svg width="22" height="20"><path d="M11 0L14 4L19.500 4.500L18.500 10L19.500 15.500L14 16L11 20L8 16L2.500 15.500L3.500 10L2.500 4.500L8 4Z" fill="#c3bb6b" /><circle cx="11" cy="10" r="7" fill="#c3bb6b" stroke="#23282b" strokeWidth="1.200" /></svg>Stage Lights</ViewBtn>
              </ViewBar>
              <Hud>FPS: 117.68, Frame time: 8.50 ms<br />NVIDIA GeForce RTX 5070 Ti: 2.0 GiB used, 13.0 GiB available<br />Process Memory: 4.8 GiB used, 45.0 GiB available<br />1280x720</Hud>
              <Axis width="44" height="42" fontFamily="Open Sans" fontWeight="400" fontSize="12" textAnchor="middle">
                <path d="M22 26V14" stroke="#5185b5" strokeWidth="1.600" /><path d="M22 26L11 32" stroke="#c05a5a" strokeWidth="1.600" /><path d="M22 26L33 32" stroke="#6ea070" strokeWidth="1.600" />
                <text x="21.500" y="12" fill="#5185b5">Z</text><text x="5.500" y="40" fill="#c05a5a">X</text><text x="38" y="40" fill="#6ea070">Y</text>
              </Axis>
              <Unit>m</Unit>
            </View></ViewFrame>
          </TopArea>

          <Tabs $mt={5}><Tab $w={169} $ls={0.04}>Isaac Sim Assets [Beta]</Tab><Tab $w={84} $on $ls={0.1}>Content</Tab><Tab $w={82}>Console</Tab></Tabs>
          <Body $h={264} $p="9px 4px 4px">
            <Row $mb={6} $pl={2}>
              <ImportBtn><svg width="12" height="12"><path d="M6 0V12M0 6H12" stroke="#6fae74" strokeWidth="2" /></svg>Import</ImportBtn>
              <Arrows $g={15} $pl={11} $w={50}><Chev left c="#56605f" /><Chev c="#56605f" /></Arrows>
              <Field $w={900}>omniverse://</Field>
            </Row>
            <Split $h={219}>
              <Pane $w={302}>
                {contentTree.map(([l, o, i, t], n) => <TreeRow key={n} lvl={l} base={10} open={o} icon={i} label={t} />)}
                <Thumb $x={293} $y={3} $h={212} />
              </Pane>
              <Pane $w={649}><Slider x={455} y={197} /></Pane>
              <InfoPane $w={378}>
                <Card $h={103} $p="51px 3px 0"><InfoLine>Created by</InfoLine><InfoLine>Modified by</InfoLine><InfoLine>File size<span>0.00 KB</span></InfoLine></Card>
                <Card $h={113} $p="3px 0 0 9px"><CardTitle><Tri w={8} h={5} />Checkpoints</CardTitle>
                  <Paper width="60" height="80"><path d="M0 4L49 0L60 10V80H0Z" fill="#8c8c8c" /><path d="M49 0L60 10L50 11Z" fill="#d8d8d8" /><path d="M17 35L47 31M17 42L47 38M17 50L47 45M17 57L47 52" stroke="#6c6c6c" /></Paper>
                </Card>
                <Thumb $x={369} $y={0} $h={153} />
              </InfoPane>
            </Split>
          </Body>
        </LeftArea>

        <RightArea>
          <Tabs><Tab $w={69} $on>Stage</Tab><Tab $w={68} $ls={0.1}>Layer</Tab><Tab $w={129} $ls={0.07}>Render Settings</Tab></Tabs>
          <Body $h={452} $p="9px 4px 0">
            <Row><Field $w={519} $pl={12} $dim><Lens /><Gap $w={6} />Search</Field>
              <SearchTools>
                <svg width="14" height="14"><path d="M0 0H11L7 6V12H4V6Z" fill="#b0b0b0" /><path d="M13 9V13H9Z" fill="#b0b0b0" /></svg>
                <Burger w={12} g={4} t={2} />
              </SearchTools></Row>
            <StageTree>
              <StageHead><span>Name (Old to New)</span><EyeIcon c="#777" /><span>Type</span></StageHead>
              <StageCols>
                <StageCol $w={432} $line><StageRow $pl={22}><Xform /><b>World (defaultPrim)</b></StageRow><StageRow $pl={5}><Expander /><Gap $w={7} /><Xform /><b>Environment</b></StageRow></StageCol>
                <StageCol $w={24} $line><StageRow $pl={4}><EyeIcon /></StageRow><StageRow $pl={4}><EyeIcon /></StageRow></StageCol>
                <StageCol $w={100}><StageRow $pl={1}><b>Xform</b></StageRow><StageRow $pl={1}><b>Xform</b></StageRow></StageCol>
              </StageCols>
            </StageTree>
          </Body>
          <Tabs $mt={6}><Tab $w={265} $pl={98}>Synthetic Data Recorder</Tab><Tab $w={183} $pl={9}>Semantics Schema Editor</Tab></Tabs>
          <Body $h={453} $p="6px 4px 0"><Field $w={550} $h={24} /></Body>
        </RightArea>
      </Workspace>

      <StatusBar />
      <TaskBar>
        <Slot $w={51} $pr={4}><svg width="16" height="16"><path d="M0 2.300L6.500 1.400V7.600H0ZM7.300 1.300L16 0V7.600H7.300ZM0 8.400H6.500V14.600L0 13.700ZM7.300 8.400H16V16L7.300 14.800Z" fill="#fff" /></svg></Slot>
        {taskIcons.map((ic, i) => <Slot key={i} $run={running[i]} $active={i === 12}>{ic}</Slot>)}
        <Tray>
          <TwoLine $w={60}>54℃<br />CPU温度</TwoLine>
          <TrayIcon $w={29} $pl={7}><svg width="12" height="7"><path d="M1 6L6 1L11 6" fill="none" stroke="#fff" strokeWidth="1.300" /></svg></TrayIcon>
          <TrayIcon $w={24}><svg width="16" height="14"><path d="M3.500 1.500H15.500V9.500H5M9 9.500V13M6 13H12M.5 3.500H5.500V8H.5ZM3 8V13" fill="none" stroke="#fff" /></svg></TrayIcon>
          <TrayIcon $w={24}><svg width="17" height="14"><path d="M1 5H4L8 1V13L4 9H1ZM10 5Q11.500 7 10 9M12 3Q15 7 12 11M14 1Q18 7 14 13" fill="none" stroke="#fff" /></svg></TrayIcon>
          <TrayIcon $w={22}>中</TrayIcon>
          <TwoLine $w={75} $ls={0.12}>9:46<br />2025/6/14</TwoLine>
          <TrayIcon $w={38}><svg width="16" height="16"><path d="M.5 .5H15.500V11.500H9L6 15V11.500H.5ZM3 3.500H13M3 6H13M3 8.500H10" fill="none" stroke="#fff" /></svg></TrayIcon>
        </Tray>
      </TaskBar>

      <Overlay>
        <OvCell $w={32} $s={13}>FPS</OvCell><OvCell $w={36} $b $s={13}>N/A</OvCell><OvCell $w={17}>|</OvCell>
        <OvCell $w={37} $s={13}>GPU</OvCell><OvCell $w={11} $b>0</OvCell><OvCell $w={22} $b $s={12}>%</OvCell><OvCell $w={17}>|</OvCell>
        <OvCell $w={36} $s={13}>CPU</OvCell><OvCell $w={18} $b>11</OvCell><OvCell $w={20} $b $s={12}>%</OvCell><OvCell $w={14}>|</OvCell>
        <OvCell $w={36}>延时</OvCell><OvCell $w={30} $b $s={13}>N/A</OvCell>
      </Overlay>
      <FileDialog />
      <Mark $x={1086} $y={328} $w={116} $h={28} />
      <Mark $x={781} $y={494} $w={85} $h={125} />
      <Mark $x={1088} $y={511} $w={339} $h={124} />
      <Mark $x={1228} $y={800} $w={96} $h={32} />
    </Screen>
  );
}
